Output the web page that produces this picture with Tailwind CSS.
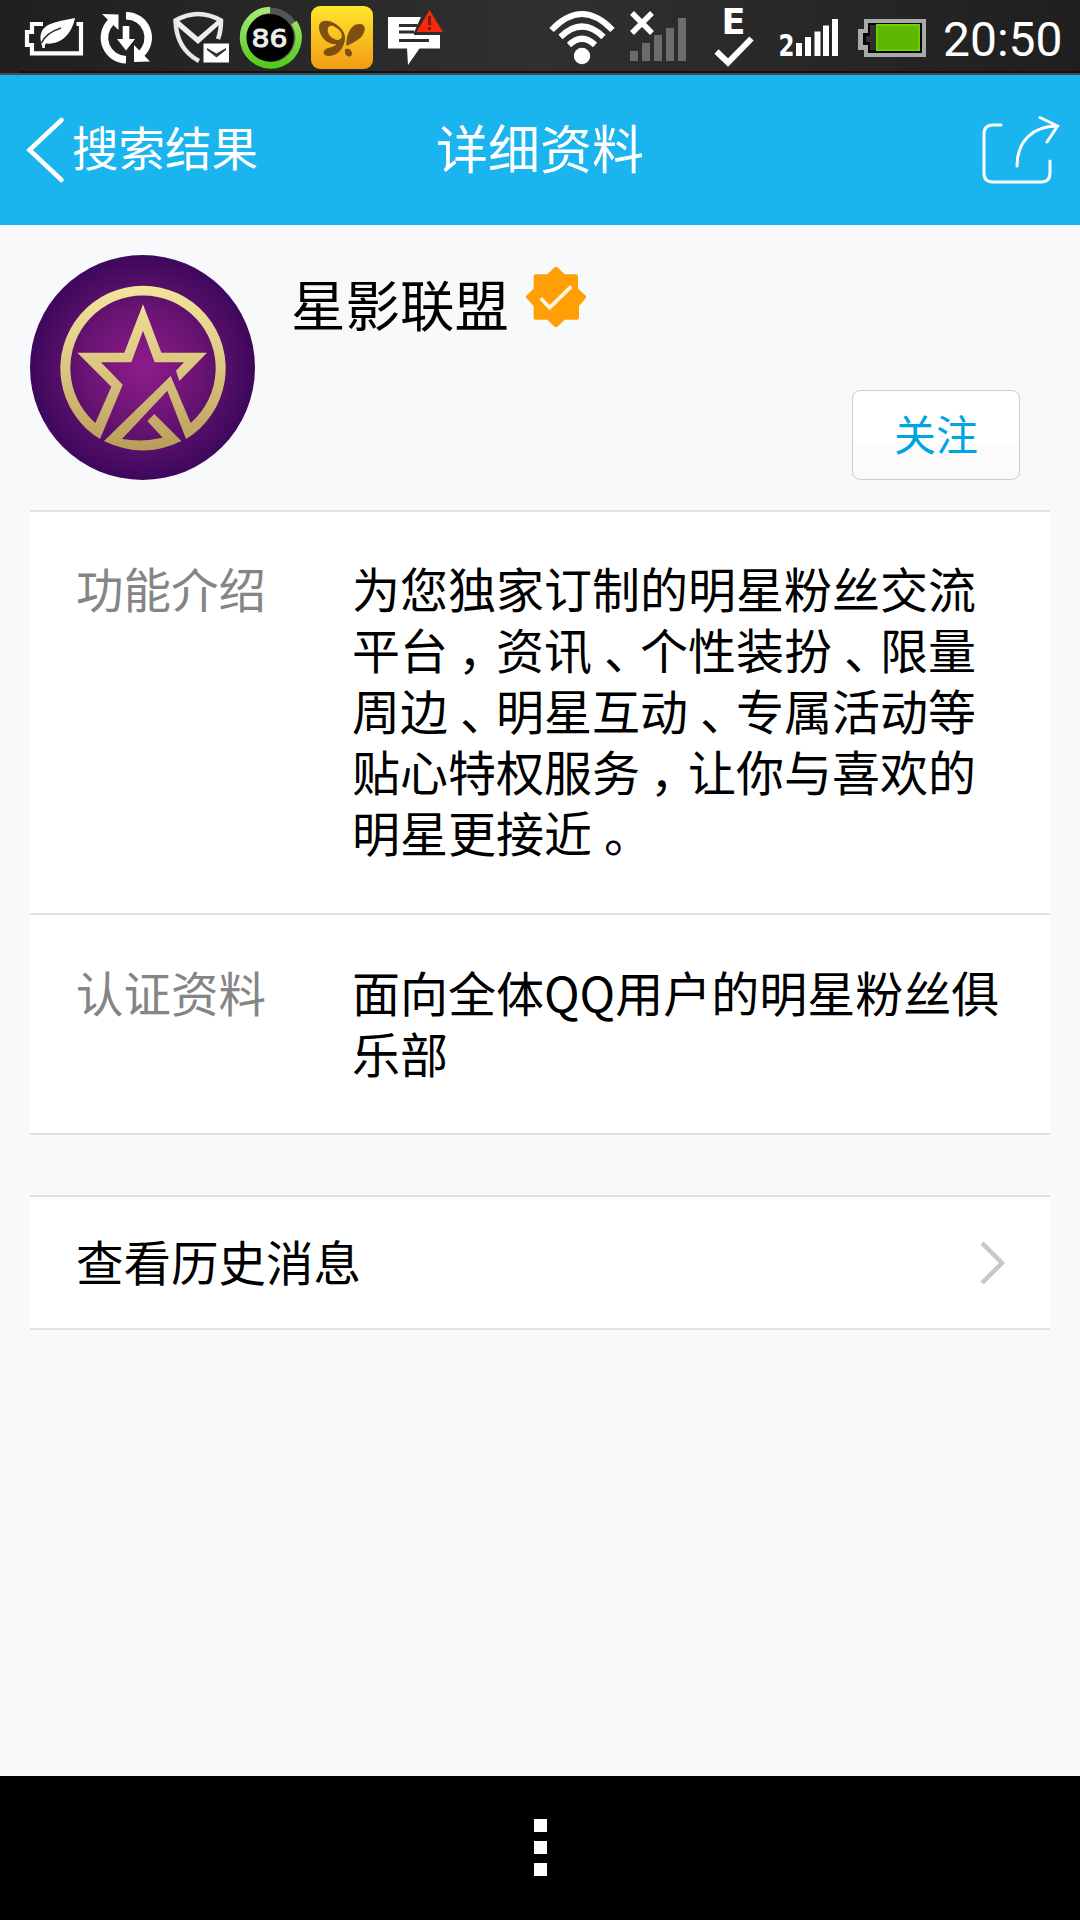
<!DOCTYPE html>
<html lang="zh-CN">
<head>
<meta charset="utf-8">
<title>详细资料</title>
<script src="https://cdn.jsdelivr.net/npm/@tailwindcss/browser@4"></script>
</head>
<body class="w-[1080px] h-[1920px] flex flex-col overflow-hidden bg-[#f8f9fb] text-black font-['Noto_Sans_CJK_SC',sans-serif]">

<!-- status bar -->
<div class="h-[75px] shrink-0 flex bg-linear-to-r from-[#1f1f1f] via-[#303030] to-[#1f1f1f] border-b-2 border-[#4a4a4a] pl-5">
  <div class="flex w-full h-[73px] shadow-[inset_0_-2px_0_#121212]">
  <!-- power saver -->
  <svg class="w-[70px] h-[71px]" viewBox="20 0 70 71" fill="none">
    <path d="M43 24H32V32H27V45H32V53.3H81V24H76.500" stroke="#fff" stroke-width="4.200"/>
    <path d="M75 18C62 21 47 22 42 31C39 37 41 41 42.500 48H45C44.500 46 45 44.500 46 43.500C62 45 72 33 75 18Z" fill="#fff"/>
    <path d="M41.500 43C45 35 52 31 61 28" stroke="#2b2b2b" stroke-width="1.500"/>
  </svg>
  <!-- sync -->
  <svg class="w-[70px] h-[71px]" viewBox="90 0 70 71" fill="none">
    <path d="M126 15.700A22 22 0 0 1 141 54M126 59.700A22 22 0 0 1 111 22" stroke="#fff" stroke-width="7.500"/>
    <path d="M134 45V62L150 61.500ZM102 14L118.500 14.500V30ZM122.700 26H129.300V39H135L126 50.500L117 39H122.700Z" fill="#fff"/>
  </svg>
  <!-- mail shield -->
  <svg class="w-[75px] h-[71px]" viewBox="160 0 75 71" fill="none">
    <path d="M199 61C184 53 176 39 175.500 20.500Q198 7.500 221 20.500Q221 31 218 39" stroke="#e8e8e8" stroke-width="4.500"/>
    <path d="M177 19L198 37L219 19V25L198 44L177 26Z" fill="#eee"/>
    <path d="M203.500 43.500H229V62.500H203.500Z" fill="#fff"/>
    <path d="M207 48L216.500 53.500L226 48V50L216.500 57.500L207 50Z" fill="#333"/>
  </svg>
  <!-- usage ring -->
  <svg class="w-[71px] h-[71px]" viewBox="235 0 71 71" fill="none">
    <defs><linearGradient id="ring" x1="0" y1="0" x2="0" y2="1"><stop stop-color="#a9e876"/><stop offset="1" stop-color="#52cc1c"/></linearGradient></defs>
    <circle cx="270" cy="37.700" r="27" fill="#000" stroke="#555" stroke-width="6.500"/>
    <path d="M270 10A27.700 27.700 0 1 0 294 22.500" stroke="url(#ring)" stroke-width="6.500"/>
    <text x="251.500" y="47" textLength="36" lengthAdjust="spacingAndGlyphs" class="font-['DejaVu_Sans'] text-[25px]" fill="#eee" stroke="#eee" stroke-width="1">86</text>
  </svg>
  <!-- butterfly app -->
  <svg class="w-[72px] h-[71px]" viewBox="306 0 72 71" fill="none">
    <defs><linearGradient id="app" x1="0" y1="0" x2="0" y2="1"><stop stop-color="#ffe62c"/><stop offset="1" stop-color="#f39b14"/></linearGradient></defs>
    <rect x="311" y="6" width="62" height="63" rx="9" fill="url(#app)"/>
    <path fill="#7d4f10" fill-rule="evenodd" d="M319 27C319 20 327 19 334 23C341 27 345 32 345 38C345 47 338 56 329 56C323 56 322 51 326 49C330 47 335 47 336 44C327 45 319 36 319 27ZM328 28C326 33 332 40 338 40C343 39 343 34 339 30C335 26 330 24 328 28Z"/>
    <path fill="#7d4f10" d="M346.500 46C346 38 349 24 360 24C366 24 366 31 362 36C358 41 352 43 346.500 46ZM345 49C349 48 352 50 352 54C351 58 346 57 345 53Z"/>
  </svg>
  <!-- message alert -->
  <svg class="w-[72px] h-[71px]" viewBox="378 0 72 71" fill="none">
    <path d="M388 17H421L414 32.500V35H440V48.500H419.500L408 65L407 48.500H388Z" fill="#fff"/>
    <path d="M399 25.500H417.500M399 32H414M399 40.500H429" stroke="#2d2d2d" stroke-width="3"/>
    <path d="M429.500 10L443 32H416.500Z" fill="#f42a0c"/>
    <path d="M429.500 16V25M429.500 27V30" stroke="#7a2010" stroke-width="3"/>
  </svg>
  <!-- wifi -->
  <svg class="w-[80px] h-[71px] ml-[95px]" viewBox="545 0 80 71" fill="none">
    <g stroke="#fff" stroke-width="6"><path d="M551.500 30Q582 -2 612.500 30"/><path d="M560.500 37Q582 16 603.500 37"/><path d="M569 45Q582 32.500 595 45"/></g>
    <circle cx="582" cy="56" r="8.200" fill="#fff"/>
  </svg>
  <!-- sim 1, no service -->
  <svg class="w-[70px] h-[71px]" viewBox="625 0 70 71" fill="none">
    <path d="M632 13L652 33M652 13L632 33" stroke="#fff" stroke-width="5.500"/>
    <path d="M630 51H638V61H630ZM642 43H650V61H642ZM654 35H662V61H654ZM666 28H674V61H666ZM678 18H686V61H678Z" fill="#6c6c6c"/>
  </svg>
  <!-- edge data -->
  <svg class="w-[75px] h-[71px]" viewBox="695 0 75 71" fill="none">
    <text x="721.500" y="33.500" textLength="24" lengthAdjust="spacingAndGlyphs" class="font-['DejaVu_Sans'] text-[35px] font-bold" fill="#fff">E</text>
    <path d="M716.500 51.500L728 62.500L751.500 38.500" stroke="#fff" stroke-width="6"/>
  </svg>
  <!-- sim 2 -->
  <svg class="w-[80px] h-[71px]" viewBox="770 0 80 71">
    <text x="778.500" y="56" textLength="16" lengthAdjust="spacingAndGlyphs" class="font-['DejaVu_Sans'] text-[30px] font-bold" fill="#fff">2</text>
    <path d="M796 43H802V56H796ZM805 37H811V56H805ZM814.500 31.500H820.500V56H814.500ZM823 25.500H829V56H823ZM832 19H838V56H832Z" fill="#fff"/>
  </svg>
  <!-- battery -->
  <svg class="w-[85px] h-[71px]" viewBox="850 0 85 71">
    <path d="M864 19H926V57H864V50H858V29H864Z" fill="#a9a9a9"/>
    <path d="M868 23H922V53H868V45H863V33H868Z" fill="#050505"/>
    <path d="M870 25H876V50H870V42H866V36H870Z" fill="#303030"/>
    <path d="M876 24H920V51H876Z" fill="#6cd400"/>
    <path d="M877.500 26H918.500V49.500H877.500Z" fill="#5cb800"/>
  </svg>
  <div class="ml-2 pt-[12px] font-[Roboto] text-[48px] leading-[56px] text-white">20:50</div>
  </div>
</div>

<!-- title bar -->
<header class="h-[150px] shrink-0 bg-[#1ab4ee] text-white grid grid-cols-[1fr_auto_1fr] items-center">
  <div class="flex items-center pl-[26px] pb-1">
    <svg class="w-[40px] h-[68px] mt-1" viewBox="26 116 40 68" fill="none" stroke="#fff" stroke-width="4.500" stroke-linecap="round"><path d="M61.500 120L29.500 150L61.500 180"/></svg>
    <span class="ml-[6px] pb-1 text-[46.500px] leading-[60px]">搜索结果</span>
  </div>
  <h1 class="text-[52px] leading-[60px] pb-[7px]">详细资料</h1>
  <svg class="justify-self-end mr-[20px] w-[80px] h-[76px]" viewBox="980 112 80 76" fill="none" stroke="#fff" stroke-width="3" stroke-linecap="round">
    <path d="M1001 125H993Q984 125 984 134V173Q984 182 993 182H1041Q1050 182 1050 173V161"/>
    <path d="M1017 166C1017 142 1032 126 1057 126M1040 117.500L1057.500 126L1047 142"/>
  </svg>
</header>

<!-- profile -->
<section class="h-[285px] shrink-0 flex px-[30px] pt-[30px]">
  <svg class="w-[225px] h-[225px]" viewBox="30 30 675 675" fill="none">
    <defs>
      <radialGradient id="av"><stop stop-color="#8e1c8a"/><stop offset=".5" stop-color="#6b1474"/><stop offset="1" stop-color="#3d085c"/></radialGradient>
      <linearGradient id="gold" gradientUnits="userSpaceOnUse" x1="0" y1="120" x2="0" y2="620"><stop stop-color="#f3e59c"/><stop offset=".5" stop-color="#dcc681"/><stop offset="1" stop-color="#b89b59"/></linearGradient>
    </defs>
    <circle cx="367.500" cy="367.500" r="337.500" fill="url(#av)"/>
    <path fill="url(#gold)" d="M240 582A248 248 0 1 1 498 582L442 437L306 582Q368 592 428 578L382 528L403 507L484 588Q370 645 252 588L452 393L512 534A218 218 0 1 0 226 534L274 425L172 323H313L369 178L424 323H561L478 408L468 377L492 352H404L369 257L334 352H243L308 419Z"/>
  </svg>
  <div class="flex-1 flex flex-col pl-[36px]">
    <div class="flex items-start pt-[8px]">
      <h2 class="text-[54.500px] leading-[80px]">星影联盟</h2>
      <svg class="ml-[17px] mt-[4px] w-[60px] h-[60px]" viewBox="768 51 180 180" fill="none">
        <path d="M858 56L882 79H918V118L942 141L921 166V203H882L858 226L834 203H797V166L774 141L797 118V79H834Z" fill="#ff9f05" stroke="#ff9f05" stroke-width="12" stroke-linejoin="round"/>
        <path d="M812 145L839 173L904 109" stroke="#fff5e0" stroke-width="11"/>
      </svg>
    </div>
    <button class="self-end mt-[47px] mr-[30px] w-[168px] h-[90px] rounded-lg border border-[#cbcdcf] bg-linear-to-b from-white from-60% to-[#fbfbfb] to-60% text-[#00a5e0] text-[42px] leading-[60px] pb-1">关注</button>
  </div>
</section>

<!-- details -->
<section class="mx-[30px] shrink-0 bg-white border-y-2 border-[#e0e1e2] text-[48px] leading-[61px]">
  <div class="h-[401px] flex pl-[46px] pt-[45px]">
    <div class="w-[276px] text-[#858585] text-[47.500px]">功能介绍</div>
    <p class="whitespace-nowrap">为您独家订制的明星粉丝交流<br>平台<span class="[font-feature-settings:'halt'] pl-[10px] pr-[14px]">，</span>资讯<span class="[font-feature-settings:'halt'] px-[12px]">、</span>个性装扮<span class="[font-feature-settings:'halt'] px-[12px]">、</span>限量<br>周边<span class="[font-feature-settings:'halt'] px-[12px]">、</span>明星互动<span class="[font-feature-settings:'halt'] px-[12px]">、</span>专属活动等<br>贴心特权服务<span class="[font-feature-settings:'halt'] pl-[10px] pr-[14px]">，</span>让你与喜欢的<br>明星更接近<span class="[font-feature-settings:'halt'] px-[12px]">。</span></p>
  </div>
  <div class="h-[220px] flex border-t-2 border-[#e0e1e2] pl-[46px] pt-[46px]">
    <div class="w-[276px] text-[#858585] text-[47.500px]">认证资料</div>
    <p class="whitespace-nowrap">面向全体QQ用户的明星粉丝俱<br>乐部</p>
  </div>
</section>

<!-- history -->
<a class="mx-[30px] mt-[60px] h-[135px] shrink-0 flex items-center justify-between bg-white border-y-2 border-[#e0e1e2] pl-[46px] pr-[44px] text-[47.500px] leading-[61px]">
  <span class="pb-[4px]">查看历史消息</span>
  <svg class="w-[26px] h-[46px]" viewBox="0 0 26 46" fill="none" stroke="#c8c8c8" stroke-width="4.500"><path d="M2 3L22 23L2 43"/></svg>
</a>

<!-- bottom key bar -->
<footer class="mt-auto h-[144px] shrink-0 bg-black flex flex-col items-center justify-center gap-[9px] pb-[2px]">
  <i class="w-[13px] h-[13px] bg-white"></i>
  <i class="w-[13px] h-[13px] bg-white"></i>
  <i class="w-[13px] h-[13px] bg-white"></i>
</footer>
</body>
</html>
